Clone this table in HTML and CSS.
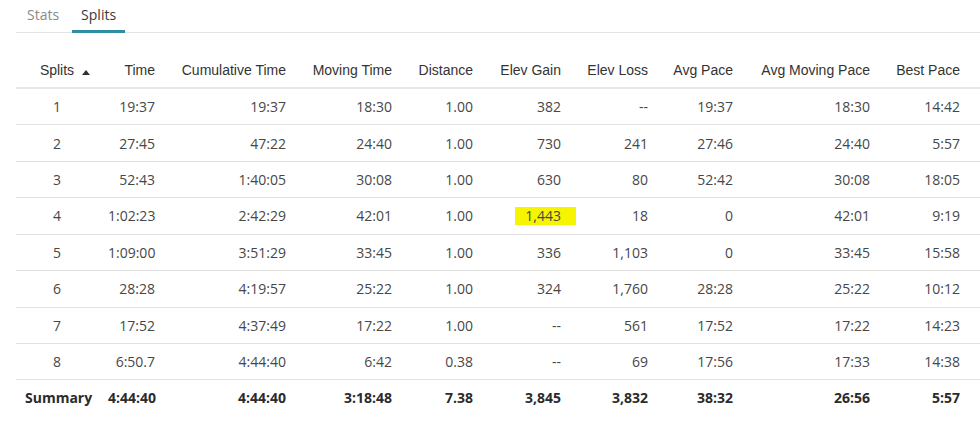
FILE: index.html
```html
<!DOCTYPE html>
<html>
<head>
<meta charset="utf-8">
<link rel="stylesheet" href="styles.css">
</head>
<body>
<div class="tabs">
  <div class="tab">Stats</div>
  <div class="tab active">Splits</div>
</div>
<table class="splits">
  <colgroup>
    <col class="c1"><col class="c2"><col class="c3"><col class="c4"><col class="c5"><col class="c6"><col class="c7"><col class="c8"><col class="c9"><col class="c10">
  </colgroup>
  <thead>
    <tr>
      <th class="first"><span class="sort">Splits</span></th>
      <th>Time</th>
      <th>Cumulative Time</th>
      <th>Moving Time</th>
      <th>Distance</th>
      <th>Elev Gain</th>
      <th>Elev Loss</th>
      <th>Avg Pace</th>
      <th>Avg Moving Pace</th>
      <th>Best Pace</th>
    </tr>
  </thead>
  <tbody>
    <tr><td class="first">1</td><td>19:37</td><td>19:37</td><td>18:30</td><td>1.00</td><td>382</td><td>--</td><td>19:37</td><td>18:30</td><td>14:42</td></tr>
    <tr><td class="first">2</td><td>27:45</td><td>47:22</td><td>24:40</td><td>1.00</td><td>730</td><td>241</td><td>27:46</td><td>24:40</td><td>5:57</td></tr>
    <tr><td class="first">3</td><td>52:43</td><td>1:40:05</td><td>30:08</td><td>1.00</td><td>630</td><td>80</td><td>52:42</td><td>30:08</td><td>18:05</td></tr>
    <tr><td class="first">4</td><td>1:02:23</td><td>2:42:29</td><td>42:01</td><td>1.00</td><td><span class="hl">1,443</span></td><td>18</td><td>0</td><td>42:01</td><td>9:19</td></tr>
    <tr><td class="first">5</td><td>1:09:00</td><td>3:51:29</td><td>33:45</td><td>1.00</td><td>336</td><td>1,103</td><td>0</td><td>33:45</td><td>15:58</td></tr>
    <tr><td class="first">6</td><td>28:28</td><td>4:19:57</td><td>25:22</td><td>1.00</td><td>324</td><td>1,760</td><td>28:28</td><td>25:22</td><td>10:12</td></tr>
    <tr><td class="first">7</td><td>17:52</td><td>4:37:49</td><td>17:22</td><td>1.00</td><td>--</td><td>561</td><td>17:52</td><td>17:22</td><td>14:23</td></tr>
    <tr><td class="first">8</td><td>6:50.7</td><td>4:44:40</td><td>6:42</td><td>0.38</td><td>--</td><td>69</td><td>17:56</td><td>17:33</td><td>14:38</td></tr>
    <tr class="summary"><td class="first">Summary</td><td>4:44:40</td><td>4:44:40</td><td>3:18:48</td><td>7.38</td><td>3,845</td><td>3,832</td><td>38:32</td><td>26:56</td><td>5:57</td></tr>
  </tbody>
</table>
</body>
</html>
```
FILE: styles.css
```css
html, body {
  margin: 0;
  padding: 0;
  background: #ffffff;
}

body {
  font-family: "Open Sans", "Liberation Sans", sans-serif;
  color: #474747;
  width: 980px;
  overflow: hidden;
}

.tabs {
  display: flex;
  gap: 4px;
  margin-left: 16px;
  padding-left: 2px;
  height: 32px;
  border-bottom: 1px solid #e3e3e3;
}

.tab {
  height: 30px;
  line-height: 30px;
  padding: 0 9px;
  font-size: 14px;
  color: #8a8a8a;
  border-bottom: 3px solid transparent;
  margin-bottom: -1px;
}

.tab.active {
  color: #3a3a3a;
  border-bottom-color: #2f8ea6;
}

.splits {
  margin-top: 19px;
  margin-left: 16px;
  width: 964px;
  table-layout: fixed;
  border-collapse: collapse;
  border-spacing: 0;
}

.c1 { width: 82px; }
.c2 { width: 67px; }
.c3 { width: 131px; }
.c4 { width: 106px; }
.c5 { width: 81px; }
.c6 { width: 88px; }
.c7 { width: 87px; }
.c8 { width: 85px; }
.c9 { width: 137px; }
.c10 { width: 100px; }

.splits th {
  font-family: "Liberation Sans", Arial, sans-serif;
  font-weight: normal;
  font-size: 14px;
  color: #333333;
  text-align: right;
  height: 35px;
  padding: 0 10px;
  border-bottom: 2px solid #e8e8e8;
  white-space: nowrap;
}

.splits td {
  font-size: 14px;
  text-align: right;
  height: 35.43px;
  padding: 0 10px;
  border-bottom: 1px solid #e2e2e2;
  white-space: nowrap;
}

.splits th:last-child,
.splits td:last-child {
  padding-right: 20px;
}

.splits th.first,
.splits td.first {
  text-align: center;
}

.sort {
  position: relative;
}

.sort::after {
  content: "";
  position: absolute;
  left: calc(100% + 8px);
  bottom: 3px;
  border-left: 4px solid transparent;
  border-right: 4px solid transparent;
  border-bottom: 5px solid #333333;
}

.splits tr.summary td {
  font-weight: bold;
  color: #2b2b2b;
  border-bottom: none;
  height: 35px;
}

.splits tr.summary td.first {
  text-align: left;
  padding-left: 9px;
}

.hl {
  position: relative;
  z-index: 0;
}

.hl::before {
  content: "";
  position: absolute;
  z-index: -1;
  left: -10px;
  right: -15px;
  top: 1px;
  bottom: 0px;
  background: #f6f400;
}
```
